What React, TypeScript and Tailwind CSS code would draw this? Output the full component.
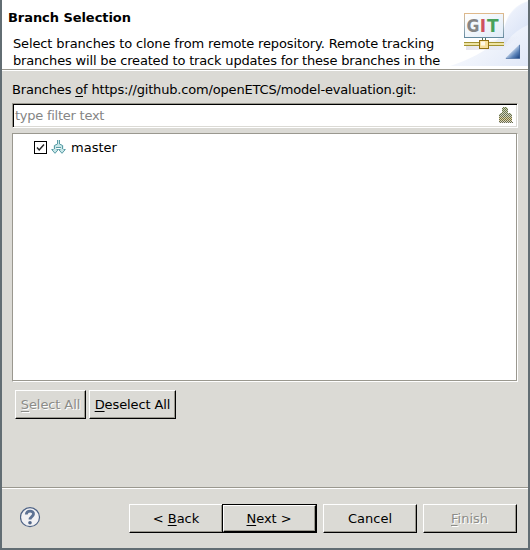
import type { ReactNode } from "react";

function Button({ children, disabled, className }: { children: ReactNode; disabled?: boolean; className: string }) {
  return (
    <button
      className={`block h-[29px] shrink-0 border border-t-white border-l-white border-r-black border-b-black shadow-[inset_-1px_-1px_0_#9a988f] whitespace-pre ${
        disabled ? "text-[#8c8c88] [text-shadow:1px_1px_0_#fff]" : "text-black"
      } ${className}`}
    >
      {children}
    </button>
  );
}

function Key({ children }: { children: ReactNode }) {
  return <span className="underline decoration-1 underline-offset-2">{children}</span>;
}

function GitBanner() {
  return (
    <svg width="88" height="69" viewBox="0 0 88 69" className="absolute top-0 right-0">
      <defs>
        <linearGradient id="sky" x1="0" y1="0" x2="1" y2="1">
          <stop offset="0.2" stopColor="#ffffff" />
          <stop offset="1" stopColor="#d3def5" />
        </linearGradient>
        <linearGradient id="curve" x1="0" y1="0" x2="0.6" y2="1">
          <stop offset="0" stopColor="#f3f6fd" />
          <stop offset="1" stopColor="#cfdbf4" />
        </linearGradient>
        <linearGradient id="screen" x1="0" y1="0" x2="1" y2="1">
          <stop offset="0" stopColor="#ffffff" />
          <stop offset="1" stopColor="#e0ebf7" />
        </linearGradient>
        <linearGradient id="frame" x1="0" y1="0" x2="0" y2="1">
          <stop offset="0" stopColor="#dfb98b" />
          <stop offset="0.5" stopColor="#a5b4ba" />
          <stop offset="1" stopColor="#64899e" />
        </linearGradient>
        <linearGradient id="corner" x1="0" y1="0" x2="1" y2="1">
          <stop offset="0.4" stopColor="#d4e2f3" />
          <stop offset="0.7" stopColor="#5a82b8" />
          <stop offset="1" stopColor="#123b7b" />
        </linearGradient>
        <linearGradient id="shade" x1="0" y1="0" x2="1" y2="0">
          <stop offset="0" stopColor="#c9c7d3" stopOpacity="0.5" />
          <stop offset="1" stopColor="#d5d5e8" stopOpacity="0" />
        </linearGradient>
      </defs>
      <path d="M10 66C35 58 58 45 64 29C68 15 76 6 88 2V66Z" fill="url(#sky)" opacity=".7" />
      <path d="M64 30C66 15 75 5 88 1V25C78 29 70 36 64 46Z" fill="url(#curve)" opacity=".65" />
      <path d="M64 38L80 36L62 50H26V46Z" fill="url(#shade)" />
      <rect x="24.5" y="13.5" width="39" height="24" fill="url(#screen)" stroke="url(#frame)" />
      <g fontFamily="'DejaVu Sans', sans-serif" fontSize="17" fontWeight="bold">
        <text x="26.5" y="32.3" fill="#858585" textLength="13" lengthAdjust="spacingAndGlyphs">G</text>
        <text x="39.8" y="32.3" fill="#cf5260">I</text>
        <text x="47" y="32.3" fill="#47a15c">T</text>
      </g>
      <path d="M24 44H64" stroke="#eee4a4" strokeWidth="2" />
      <path d="M24 42.5H64M24 45.5H64" stroke="#a39231" />
      <path d="M42.5 38V40M45.5 38V40" stroke="#557458" />
      <rect x="39.5" y="40.5" width="9" height="8" fill="#f7df9a" stroke="#947213" />
      <rect x="41" y="41.5" width="4" height="4" fill="#fff8e5" />
      <path d="M65 58.5L80 44V58.5Z" fill="url(#corner)" />
      <path d="M66 58.5H79.5V45" fill="none" stroke="#3d6197" strokeWidth=".6" />
    </svg>
  );
}

function BroomIcon() {
  return (
    <svg width="14" height="16" viewBox="0 0 14 16" shapeRendering="crispEdges">
      <defs>
        <pattern id="dither" width="2" height="2" patternUnits="userSpaceOnUse">
          <path d="M0 0h1v1h-1zM1 1h1v1h-1z" fill="#6b6f4d" />
        </pattern>
        <linearGradient id="broom" x1="0" y1="0" x2="0" y2="1">
          <stop offset="0" stopColor="#c5d5aa" />
          <stop offset=".55" stopColor="#d0d6c8" />
          <stop offset=".75" stopColor="#e8d491" />
          <stop offset="1" stopColor="#d6d6df" />
        </linearGradient>
      </defs>
      <path d="M4 0h4v1h1v5h3v1h1v8h1v1h-14v-9h1v-1h2v-5h1z" fill="url(#broom)" />
      <path d="M4 0h4v1h1v5h3v1h1v8h1v1h-14v-9h1v-1h2v-5h1z" fill="url(#dither)" />
    </svg>
  );
}

function BranchIcon() {
  return (
    <svg width="16" height="15" viewBox="0 0 16 15">
      <path d="M6.5 0V3.5L2.5 5.5V9.5H.5L4 13.5L7.5 9.5H5.5V7H9.5V9.5H7.5L11 13.5L14.5 9.5H12.5V5.5L8.5 3.5V0Z" fill="#c8e7e8" />
      <path d="M6.5 0V4L3.5 5.5V9M8.5 0V4L11.5 5.5V9M5 7.5H10" fill="none" stroke="#5b9ca6" />
      <path d="M2.5 9.5H.7L4 13.3L7.3 9.5H5.5M9.5 9.5H7.7L11 13.3L14.3 9.5H12.5" fill="none" stroke="#5b9ca6" />
    </svg>
  );
}

function HelpIcon() {
  return (
    <svg width="22" height="22" viewBox="0 0 22 22">
      <circle cx="10" cy="10.2" r="9.5" fill="#f1f1f4" stroke="#4d6285" strokeWidth="1.2" />
      <path d="M6.3 7.5C6.5 2.9 13.9 3.2 13.5 7.2C13.3 9.5 10 9.8 10 12.6" fill="none" stroke="#5d7294" strokeWidth="2.8" />
      <circle cx="10" cy="15.8" r="1.8" fill="#526789" />
    </svg>
  );
}

export default function App() {
  return (
    <main className="flex h-[550px] w-[530px] flex-col overflow-hidden border-x-2 border-b-2 border-[#626d73] bg-[#dbdad5] font-['DejaVu_Sans',sans-serif] text-[13px] leading-[17px] text-black">
      <header className="relative h-[69px] shrink-0 overflow-hidden bg-white">
        <GitBanner />
        <h1 className="pt-[9px] pl-[6px] font-bold tracking-[-0.06px]">Branch Selection</h1>
        <p className="mt-[9px] pl-[11px] whitespace-nowrap">
          <span className="block tracking-[-0.13px]">Select branches to clone from remote repository. Remote tracking</span>
          <span className="block tracking-[-0.17px]">branches will be created to track updates for these branches in the</span>
        </p>
      </header>
      <div className="h-[2px] shrink-0 border-t border-b border-t-[#9a988f] border-b-white" />
      <section className="flex flex-1 flex-col px-[10px]">
        <label className="mt-[10px] h-[22px] tracking-[-0.17px] whitespace-nowrap">
          Branches <Key>o</Key>f https://github.com/openETCS/model-evaluation.git:
        </label>
        <div className="flex h-[25px] shrink-0 items-center justify-between border border-t-[#9a988f] border-r-white border-b-white border-l-[#9a988f] bg-white pr-[4px] pb-px pl-[2px] shadow-[inset_1px_1px_0_#000,inset_-1px_-1px_0_#dbdad5]">
          <span className="pt-px tracking-[-0.25px] text-[#858585]">type filter text</span>
          <BroomIcon />
        </div>
        <div className="mt-[5px] h-[249px] shrink-0 border border-t-[#9a988f] border-r-white border-b-white border-l-[#9a988f] bg-white pt-[4px] pl-[21px] shadow-[inset_-1px_-1px_0_#9a988f]">
          <div className="flex h-[18px] items-center">
            <span className="flex h-[13px] w-[13px] items-center justify-center border border-black">
              <svg width="11" height="11" viewBox="0 0 11 11">
                <path d="M2 5.5L4.2 8L9 2.5" fill="none" stroke="#222" strokeWidth="1.4" />
              </svg>
            </span>
            <span className="ml-[4px]"><BranchIcon /></span>
            <span className="ml-[4px]">master</span>
          </div>
        </div>
        <div className="mt-[8px] flex gap-[3px] pl-[3px]">
          <Button disabled className="w-[71px] tracking-[-0.1px]"><Key>S</Key>elect All</Button>
          <Button className="w-[87px] tracking-[-0.1px]"><Key>D</Key>eselect All</Button>
        </div>
      </section>
      <div className="h-[2px] shrink-0 border-t border-b border-t-[#9a988f] border-b-white" />
      <footer className="flex h-[59px] shrink-0 items-start pt-[15px] pr-[11px] pl-[18px]">
        <span className="mt-[3px]"><HelpIcon /></span>
        <div className="ml-auto flex">
          <Button className="w-[93px] border-r-0"><span>&lt; <Key>B</Key>ack</span></Button>
          <div className="h-[29px] w-[95px] border border-black">
            <Button className="h-[27px]! w-[93px] pr-px tracking-[-0.05px]"><Key>N</Key>ext &gt;</Button>
          </div>
          <Button className="ml-[6px] w-[94px]">Cancel</Button>
          <Button disabled className="ml-[6px] w-[94px] pr-[1px]"><Key>F</Key>inish</Button>
        </div>
      </footer>
    </main>
  );
}
